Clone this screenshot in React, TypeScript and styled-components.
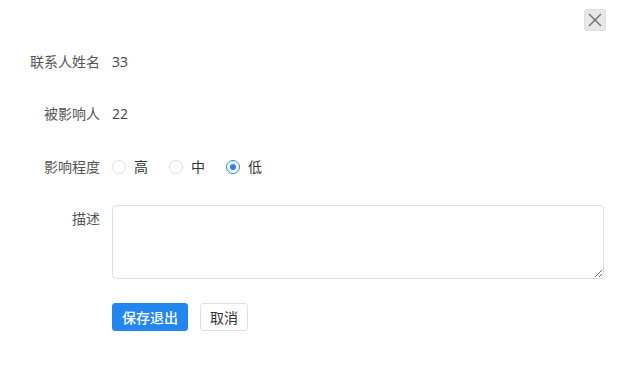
import React, { useState } from "react";
import styled, { createGlobalStyle } from "styled-components";

const GlobalStyle = createGlobalStyle`
    html, body {
        margin: 0;
        padding: 0;
        background: #fff;
    }
    body {
        font-family: "Open Sans", "Noto Sans CJK SC", sans-serif;
        font-size: 14px;
        color: #333;
    }
`;

const Dialog = styled.div`
    width: 623px;
    height: 366px;
    box-sizing: border-box;
    padding: 9px 19px 0 0;
    background: #fff;
`;

const TopBar = styled.div`
    display: flex;
    justify-content: flex-end;
    margin-right: -2px;
`;

const CloseButton = styled.button`
    width: 22px;
    height: 22px;
    padding: 0;
    border: 1px solid #dedede;
    border-radius: 3px;
    background: #e8e8e8;
    display: flex;
    align-items: center;
    justify-content: center;
    cursor: pointer;
`;

const Form = styled.div`
    margin-top: 15px;
    display: flex;
    flex-direction: column;
`;

const Row = styled.div<{ $top?: boolean; $gap?: number }>`
    display: grid;
    grid-template-columns: 100px 1fr;
    column-gap: 12px;
    align-items: ${(p) => (p.$top ? "start" : "center")};
    min-height: 28px;
    margin-bottom: ${(p) => p.$gap ?? 20}px;
`;

const Label = styled.label<{ $pad?: number }>`
    text-align: right;
    color: #555;
    line-height: 20px;
    padding-top: ${(p) => p.$pad ?? 0}px;
    white-space: nowrap;
`;

const Value = styled.span`
    color: #444;
    line-height: 32px;
`;

const RadioGroup = styled.div`
    display: flex;
    align-items: center;
    gap: 21px;
    height: 32px;
`;

const RadioItem = styled.label`
    display: flex;
    align-items: center;
    gap: 8px;
    color: #333;
    cursor: pointer;
    line-height: 20px;
`;

const RadioDot = styled.span<{ $checked: boolean }>`
    width: 14px;
    height: 14px;
    box-sizing: border-box;
    border-radius: 50%;
    border: 1px solid ${(p) => (p.$checked ? "#2386ee" : "#dcdfe6")};
    display: flex;
    align-items: center;
    justify-content: center;
    &::after {
        content: "";
        width: 6px;
        height: 6px;
        border-radius: 50%;
        background: #2386ee;
        display: ${(p) => (p.$checked ? "block" : "none")};
    }
`;

const TextArea = styled.textarea`
    display: block;
    width: 100%;
    height: 74px;
    box-sizing: border-box;
    border: 1px solid #dcdfe6;
    border-radius: 4px;
    padding: 5px 8px;
    font-family: inherit;
    font-size: 14px;
    outline: none;
`;

const Actions = styled.div`
    display: flex;
    gap: 12px;
`;

const Button = styled.button<{ $primary?: boolean }>`
    height: 28px;
    padding: 0 9px;
    box-sizing: border-box;
    border-radius: 3px;
    font-family: inherit;
    font-size: 14px;
    font-weight: ${(p) => (p.$primary ? 500 : 400)};
    border: 1px solid ${(p) => (p.$primary ? "#2386ee" : "#dcdfe6")};
    background: ${(p) => (p.$primary ? "#2386ee" : "#fff")};
    color: ${(p) => (p.$primary ? "#fff" : "#333")};
    cursor: pointer;
`;

const levels = ["高", "中", "低"];

function App() {
    const [level, setLevel] = useState("低");

    return (
        <Dialog>
            <GlobalStyle />
            <TopBar>
                <CloseButton aria-label="close">
                    <svg width="14" height="14" viewBox="0 0 14 14">
                        <path d="M1 1L13 13M13 1L1 13" stroke="#6e6e6e" strokeWidth="1.4" />
                    </svg>
                </CloseButton>
            </TopBar>
            <Form>
                <Row>
                    <Label>联系人姓名</Label>
                    <Value>33</Value>
                </Row>
                <Row $gap={21}>
                    <Label>被影响人</Label>
                    <Value>22</Value>
                </Row>
                <Row $gap={22}>
                    <Label>影响程度</Label>
                    <RadioGroup>
                        {levels.map((l) => (
                            <RadioItem key={l} onClick={() => setLevel(l)}>
                                <RadioDot $checked={level === l} />
                                {l}
                            </RadioItem>
                        ))}
                    </RadioGroup>
                </Row>
                <Row $top $gap={24}>
                    <Label $pad={4}>描述</Label>
                    <TextArea />
                </Row>
                <Row $top>
                    <span />
                    <Actions>
                        <Button $primary>保存退出</Button>
                        <Button>取消</Button>
                    </Actions>
                </Row>
            </Form>
        </Dialog>
    );
}

export default App;
